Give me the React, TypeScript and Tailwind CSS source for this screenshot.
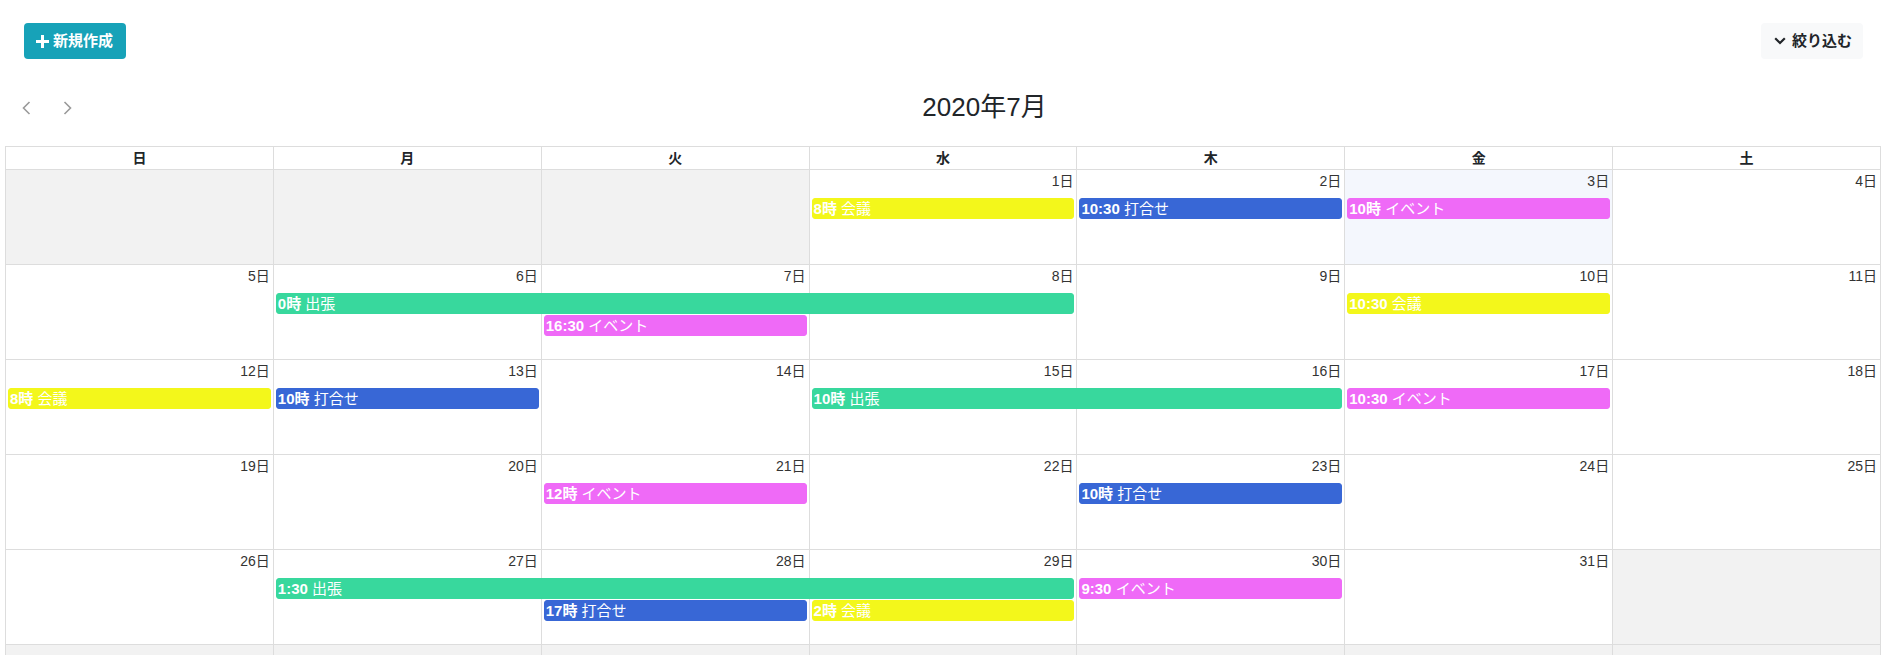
import React from 'react';

type CalEvent = {
  col: number;
  span: number;
  level: number;
  time: string;
  title: string;
  color: 'yellow' | 'blue' | 'pink' | 'green';
};

type Week = {
  days: (number | null)[];
  today?: number;
  events: CalEvent[];
};

const weekdays = ['日', '月', '火', '水', '木', '金', '土'];

const weeks: Week[] = [
  {
    days: [null, null, null, 1, 2, 3, 4],
    today: 5,
    events: [
      { col: 3, span: 1, level: 0, time: '8時', title: '会議', color: 'yellow' },
      { col: 4, span: 1, level: 0, time: '10:30', title: '打合せ', color: 'blue' },
      { col: 5, span: 1, level: 0, time: '10時', title: 'イベント', color: 'pink' },
    ],
  },
  {
    days: [5, 6, 7, 8, 9, 10, 11],
    events: [
      { col: 1, span: 3, level: 0, time: '0時', title: '出張', color: 'green' },
      { col: 2, span: 1, level: 1, time: '16:30', title: 'イベント', color: 'pink' },
      { col: 5, span: 1, level: 0, time: '10:30', title: '会議', color: 'yellow' },
    ],
  },
  {
    days: [12, 13, 14, 15, 16, 17, 18],
    events: [
      { col: 0, span: 1, level: 0, time: '8時', title: '会議', color: 'yellow' },
      { col: 1, span: 1, level: 0, time: '10時', title: '打合せ', color: 'blue' },
      { col: 3, span: 2, level: 0, time: '10時', title: '出張', color: 'green' },
      { col: 5, span: 1, level: 0, time: '10:30', title: 'イベント', color: 'pink' },
    ],
  },
  {
    days: [19, 20, 21, 22, 23, 24, 25],
    events: [
      { col: 2, span: 1, level: 0, time: '12時', title: 'イベント', color: 'pink' },
      { col: 4, span: 1, level: 0, time: '10時', title: '打合せ', color: 'blue' },
    ],
  },
  {
    days: [26, 27, 28, 29, 30, 31, null],
    events: [
      { col: 1, span: 3, level: 0, time: '1:30', title: '出張', color: 'green' },
      { col: 4, span: 1, level: 0, time: '9:30', title: 'イベント', color: 'pink' },
      { col: 2, span: 1, level: 1, time: '17時', title: '打合せ', color: 'blue' },
      { col: 3, span: 1, level: 1, time: '2時', title: '会議', color: 'yellow' },
    ],
  },
  {
    days: [null, null, null, null, null, null, null],
    events: [],
  },
];

const colStart = ['col-start-1', 'col-start-2', 'col-start-3', 'col-start-4', 'col-start-5', 'col-start-6', 'col-start-7'];
const colSpan = ['', 'col-span-1', 'col-span-2', 'col-span-3'];
const rowStart = ['row-start-2', 'row-start-3'];

const eventColor = {
  yellow: 'bg-[#f3f71b] border-[#f3f71b]',
  blue: 'bg-[#3867d6] border-[#3867d6]',
  pink: 'bg-[#ef6af7] border-[#ef6af7]',
  green: 'bg-[#38d89d] border-[#38d89d]',
};

const ChevronLeft = () => (
  <svg width="9" height="14" viewBox="0 0 9 14" fill="none">
    <path d="M7.5 1L1.5 7l6 6" stroke="#9a9a9a" strokeWidth="1.6" />
  </svg>
);

const ChevronRight = () => (
  <svg width="9" height="14" viewBox="0 0 9 14" fill="none">
    <path d="M1.5 1l6 6-6 6" stroke="#9a9a9a" strokeWidth="1.6" />
  </svg>
);

const WeekRow: React.FC<{ week: Week }> = ({ week }) => (
  <div className="grid grid-cols-7 grid-rows-[27px_22px_22px_1fr] h-[95px] border-b border-[#ddd]">
    {week.days.map((d, i) => (
      <div
        key={`bg-${i}`}
        className={`${colStart[i]} row-start-1 row-span-4 border-r border-[#ddd] ${
          d === null ? 'bg-[#f2f2f2]' : week.today === i ? 'bg-[#f4f7fd]' : 'bg-white'
        }`}
      />
    ))}
    {week.days.map((d, i) =>
      d === null ? null : (
        <div
          key={`num-${i}`}
          className={`${colStart[i]} row-start-1 text-right pr-[4px] pt-px text-[14px] leading-[20px] text-[#333]`}
        >
          {d}日
        </div>
      )
    )}
    {week.events.map((ev, i) => (
      <div
        key={`ev-${i}`}
        className={`${colStart[ev.col]} ${colSpan[ev.span]} ${rowStart[ev.level]} ml-[2px] mr-[3px] mt-px h-[21px] rounded-[3px] border px-px text-[15px] leading-[19px] text-white whitespace-nowrap overflow-hidden ${eventColor[ev.color]}`}
      >
        <span className="font-bold">{ev.time}</span> {ev.title}
      </div>
    ))}
  </div>
);

export default function App() {
  return (
    <div className="h-[655px] overflow-hidden bg-white font-['Liberation_Sans','Noto_Sans_CJK_JP',sans-serif] text-[#212529]">
      <div className="flex justify-between items-center pt-[23px] pl-[24px] pr-[27px]">
        <button className="flex items-center gap-[4px] h-[36px] pl-[12px] pr-[13px] rounded-[4px] bg-[#17a2b8] text-white text-[15px] font-bold">
          <svg width="13" height="13" viewBox="0 0 13 13">
            <rect x="5" y="0" width="3" height="13" fill="white" />
            <rect x="0" y="5" width="13" height="3" fill="white" />
          </svg>
          新規作成
        </button>
        <button className="flex items-center gap-[6px] h-[36px] pl-[13px] pr-[11px] rounded-[4px] bg-[#f8f9fa] text-[#212529] text-[15px] font-bold">
          <svg width="12" height="8" viewBox="0 0 12 8" fill="none">
            <path d="M1.2 1.2L6 6l4.8-4.8" stroke="#212529" strokeWidth="2.2" />
          </svg>
          絞り込む
        </button>
      </div>

      <div className="ml-[5px] w-[1876px] flex justify-between mt-[33px] mb-[23px] h-[31px]">
        <div className="w-[83px] flex items-center gap-[32px] pl-[17px]">
          <ChevronLeft />
          <ChevronRight />
        </div>
        <h2 className="text-[26px] leading-[31px] font-normal">2020年7月</h2>
        <div />
      </div>

      <div className="ml-[5px] w-[1876px] border-l border-t border-[#ddd]">
        <div className="grid grid-cols-7">
          {weekdays.map((w) => (
            <div
              key={w}
              className="h-[23px] border-r border-b border-[#ddd] text-center text-[14px] leading-[22px] font-bold"
            >
              {w}
            </div>
          ))}
        </div>
        {weeks.map((week, i) => (
          <WeekRow key={i} week={week} />
        ))}
      </div>
    </div>
  );
}
